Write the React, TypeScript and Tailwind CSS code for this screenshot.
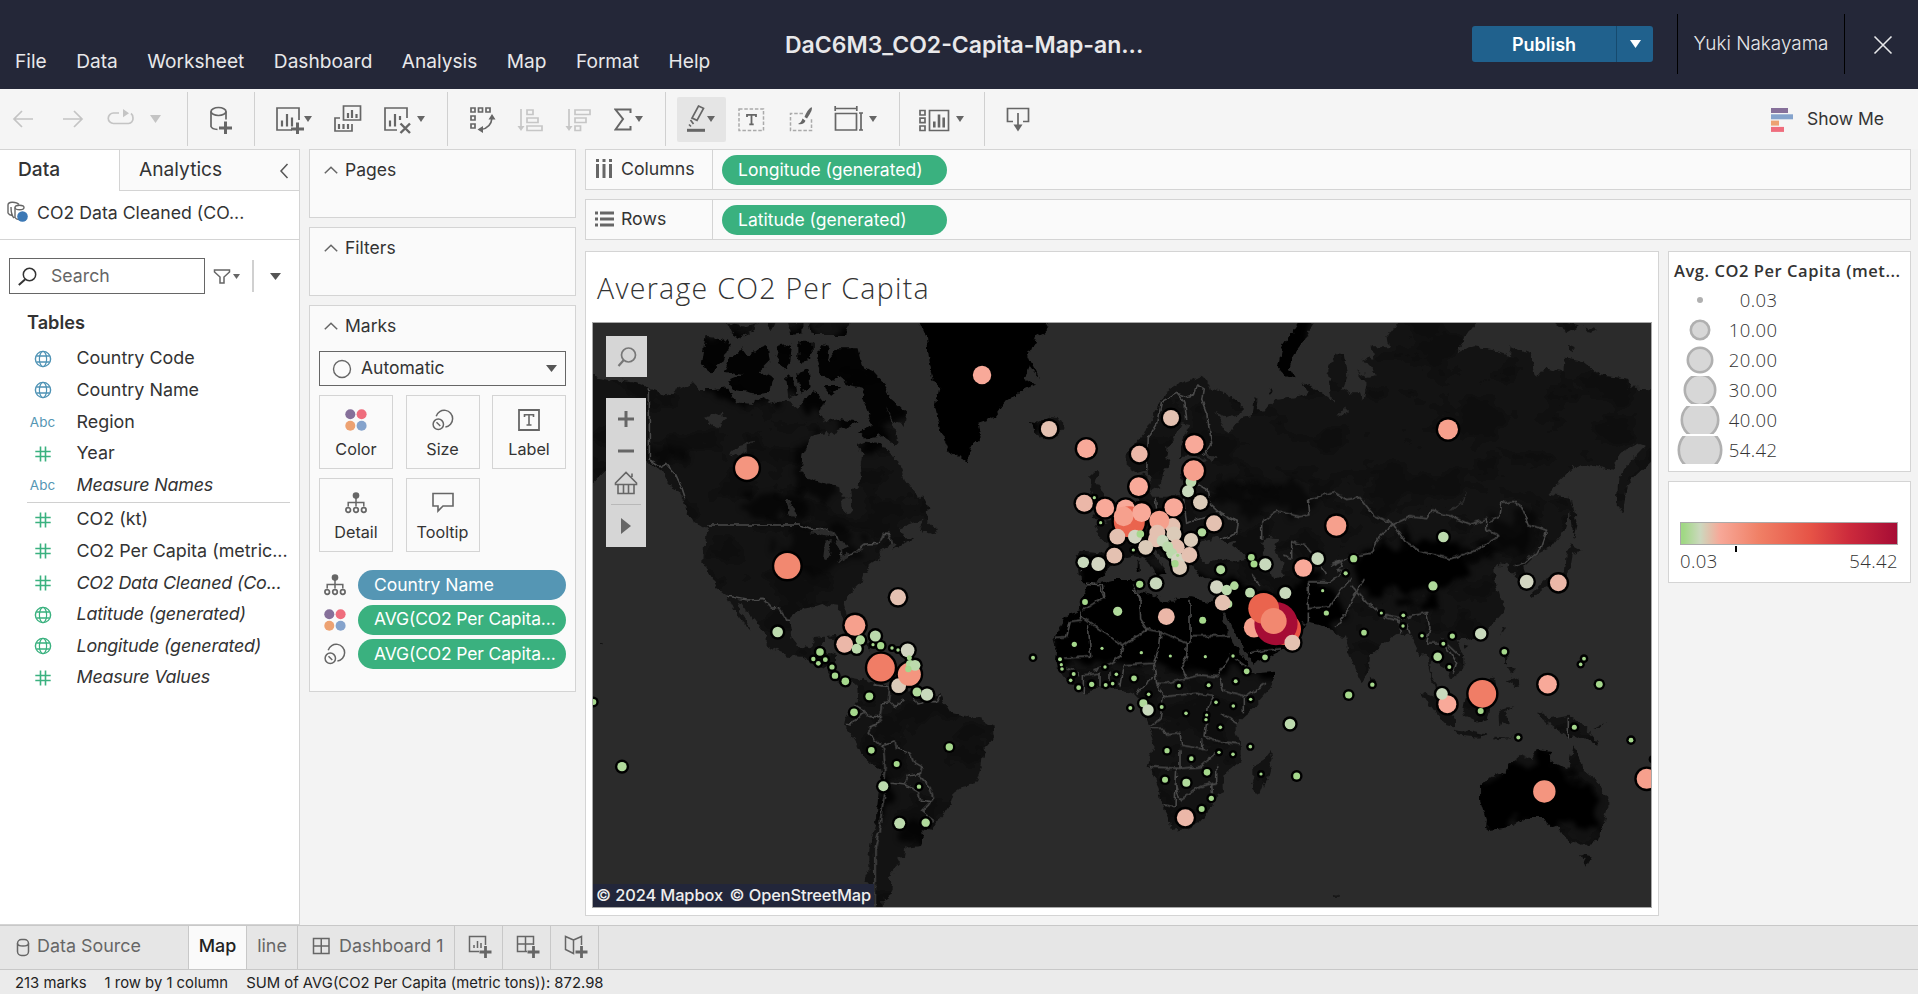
import React from 'react';
import type { ReactNode } from 'react';

/* ---------- map marks ---------- */

type Mark = { x: number; y: number; r: number };

// Each region stores x, y, r triples on its own grid; x and y are scaled to map units.
function region(ox: number, oy: number, sx: number, sy: number, v: number[]): Mark[] {
  const out: Mark[] = [];
  for (let i = 0; i < v.length; i += 3) out.push({ x: ox + v[i] / sx, y: oy + v[i + 1] / sy, r: v[i + 2] });
  return out;
}

const europe = region(1020, 310, 3, 3, [
  87, 357, 8.1, 199, 416, 9.3, 358, 432, 8.3, 453, 324, 8, 523, 403, 9.2, 513, 515, 5.4, 504, 544, 6, 521, 482, 10.3,
  356, 530, 9.3, 541, 577, 7.3, 193, 580, 8.5, 223, 563, 1.6, 255, 594, 9.2, 317, 597, 9.4, 328, 635, 15.5, 311, 619, 9.8,
  365, 608, 9.4, 461, 592, 9.2, 458, 648, 7.9, 408, 688, 8, 418, 632, 10, 412, 668, 8, 462, 672, 7.5,
  345, 680, 7, 361, 672, 3.8, 292, 680, 7.9, 283, 737, 7.9, 190, 757, 5.7, 235, 762, 7, 377, 712, 7.4, 242, 638, 1.6,
  340, 720, 1.6, 582, 640, 8, 546, 667, 4.2, 513, 690, 7.1, 470, 712, 8, 428, 692, 6, 443, 710, 5.4, 455, 730, 5.5,
  474, 750, 7, 479, 773, 7.3, 508, 735, 7.9, 473, 736, 1.6, 465, 761, 3.7, 602, 779, 4.5, 359, 823, 3.6, 408, 820, 6.2,
  195, 876, 2.9, 694, 742, 3.4, 702, 762, 3.5, 736, 763, 6.1, 590, 831, 6.7, 620, 840, 5.2, 643, 827, 4.3,
  625, 882, 4, 608, 878, 7.8, 690, 848, 4.9, 796, 849, 6, 850, 774, 8.8, 893, 746, 6.3, 949, 647, 10, 1001, 746, 3.6,
  977, 790, 2.1, 908, 842, 1.6,
]);

const africa = region(1000, 520, 3, 3, [
  353, 274, 4.6, 499, 290, 8.4, 608, 301, 3.5, 223, 373, 2.6, 306, 385, 1.6, 424, 398, 1.7, 511, 408, 1.6, 616, 410, 1.6,
  699, 408, 1.7, 99, 413, 2, 795, 412, 2.8, 740, 454, 2.8, 707, 484, 2, 180, 418, 2, 184, 434, 1.6, 186, 447, 1.8,
  221, 462, 2, 212, 481, 1.8, 236, 503, 2.4, 275, 493, 2.6, 315, 441, 1.7, 349, 463, 1.8, 317, 495, 2, 338, 491, 1.8,
  402, 475, 2.8, 446, 523, 1.8, 537, 497, 2, 626, 496, 2, 391, 564, 2, 430, 550, 4, 444, 570, 5.7, 485, 561, 2,
  558, 580, 1.8, 648, 547, 1.8, 620, 585, 1.6, 618, 599, 1.7, 700, 558, 1.8, 752, 538, 1.7, 661, 622, 1.8, 751, 680, 1.8,
  699, 703, 1.8, 657, 697, 1.7, 501, 692, 2.6, 574, 716, 2.3, 621, 757, 3.3, 495, 779, 3, 559, 788, 4, 783, 762, 1.6,
  890, 768, 3.5, 870, 612, 5.3, 634, 835, 2.6, 605, 867, 3, 556, 893, 8.5, 1046, 525, 3.6, 1117, 494, 2.2, 1092, 338, 2.8,
  979, 279, 2.6, 1144, 279, 1.6, 1210, 286, 1.9, 1209, 318, 1.7, 762, 322, 10.2, 855, 327, 16, 828, 311, 21.6,
  791, 265, 15.4, 821, 303, 13, 877, 368, 7.9,
]);

const pacific = region(1180, 310, 3, 2.613, [
  804, 312, 10, 790, 593, 5.3, 759, 721, 4.6, 1040, 710, 6.9, 1135, 713, 8.4, 902, 846, 5.7, 726, 851, 1.8, 817, 852, 2.6,
  790, 872, 2, 773, 906, 4.3, 808, 933, 2, 973, 893, 2.8, 1212, 911, 1.9, 1202, 926, 1.8, 1103, 978, 9.2, 1258, 978, 3.4,
  907, 1003, 13.8, 902, 1048, 3, 802, 1030, 9, 786, 1003, 5.8, 1015, 1117, 2, 1183, 1090, 2.5, 1353, 1124, 2.4,
  1093, 1258, 11.2, 1400, 1225, 10, 1418, 1174, 1.6,
]);

const americas = region(580, 500, 3, 3, [
  622, 198, 13.1, 954, 292, 8, 593, 396, 5.3, 794, 433, 8.4, 825, 376, 10.4, 830, 446, 5, 841, 420, 4.7, 886, 408, 5.5,
  879, 434, 1.6, 902, 437, 3.6, 936, 444, 1.7, 954, 450, 1.7, 983, 451, 6.8, 956, 557, 7.4, 988, 523, 11.5, 988, 473, 2.5,
  990, 492, 4, 1005, 496, 5.4, 985, 507, 3.2, 903, 503, 13.8, 720, 456, 3.8, 700, 477, 2.2, 715, 490, 2.4, 736, 479, 2.4,
  756, 501, 2.6, 765, 527, 3.2, 796, 544, 3.8, 868, 589, 3.9, 822, 637, 3.8, 1011, 576, 4.5, 1041, 584, 6.2, 874, 751, 3.3,
  950, 792, 3, 1108, 741, 3.7, 910, 859, 5, 1017, 860, 2.2, 959, 970, 5.5, 1037, 968, 4.2, 126, 800, 4.7, 40, 606, 3,
]);

const north = region(580, 145, 2.45, 3, [409, 969, 11.8, 985, 690, 9.2]);

const marks = [...americas, ...north, ...europe, ...africa, ...pacific];

const ramp: [number, string][] = [
  [3.9, '#a5d88c'], [4.8, '#b0da9b'], [5.6, '#bcdaad'], [6.4, '#c8d9bc'], [7.0, '#d2d5c1'], [7.6, '#dbcbb9'],
  [8.2, '#e4c1b1'], [8.7, '#ebb7a8'], [9.5, '#f8a999'], [10.8, '#f6a08d'], [12.5, '#f4957f'], [13.4, '#f28870'],
  [14.5, '#f07d66'], [15.8, '#ea644e'], [17, '#ea5545'], [99, '#a60c35'],
];
const shade = (r: number) => ramp.find(([max]) => r <= max)![1];

/* ---------- map base ---------- */

function Land() {
  return (
    <>
      <g transform="translate(580 145) scale(.40816 .33333)">
        <path d="M20,690 60,700 130,712 165,728 210,748 240,735 275,715 290,735 330,735 360,730 385,775 420,780 445,755 470,770 500,770 520,775 535,790 550,760 580,740 600,770 590,800 600,830 620,850 600,865 575,870 560,895 545,930 540,980 560,1000 600,1015 635,1030 640,1060 650,1100 662,1105 668,1070 665,1040 690,1010 685,960 690,930 680,900 700,890 740,895 760,925 775,950 785,960 800,1010 825,1050 850,1080 850,1120 780,1150 300,1150 275,1130 260,1100 255,1070 240,1040 215,1010 200,975 175,960 160,940 100,960 60,980 20,1030Z" />
        <path d="M310,575 345,580 370,600 350,650 320,680 298,660 303,620ZM365,640 400,610 415,635 440,610 460,600 465,650 440,680 470,700 465,740 430,745 380,735 360,710 400,690 350,680ZM490,600 520,595 515,650 500,675 480,640ZM535,590 570,590 570,620 545,660 535,640ZM590,600 610,605 605,650 630,610 680,610 690,660 720,680 750,720 760,760 800,800 795,840 770,830 750,790 770,850 778,890 770,900 740,870 700,880 680,860 715,845 705,800 690,760 700,730 660,720 640,700 620,710 590,690 580,650ZM360,535 400,545 435,535 430,555 390,575 370,560ZM505,530 545,530 545,565 515,570ZM460,530 480,530 470,560ZM560,530 660,530 655,570 570,570ZM535,680 560,670 565,730 540,740ZM505,690 525,700 530,750 510,760ZM600,720 640,720 610,750ZM600,830 640,820 680,830 650,850 610,870Z" />
        <path d="M830,525 850,580 855,640 865,700 880,730 870,790 885,870 900,915 935,940 950,955 960,910 980,870 975,835 1010,820 1040,770 1080,740 1115,720 1090,700 1100,660 1125,700 1105,650 1095,620 1120,600 1110,580 1135,565 1150,545 1140,525ZM1105,825 1125,830 1150,815 1175,820 1187,845 1160,880 1130,875 1115,860Z" />
      </g>
      <g transform="translate(580 500) scale(.33333)">
        <path d="M310,0 335,30 345,45 370,75 382,90 375,130 373,190 385,215 400,240 412,265 440,285 452,310 465,335 480,360 505,385 515,395 505,375 490,350 478,330 470,305 485,310 500,335 520,355 545,385 560,410 560,435 590,450 630,468 665,470 690,480 705,495 740,505 750,530 775,550 800,556 815,546 830,560 840,550 835,540 815,536 785,538 768,520 768,468 745,460 718,455 725,440 735,425 735,410 705,415 690,445 655,440 635,415 630,380 635,345 650,328 700,322 730,312 745,318 775,320 785,345 797,360 803,345 790,305 810,280 840,250 850,220 870,195 900,175 895,155 920,140 950,130 940,150 970,130 1000,115 975,110 960,85 950,70 970,60 1000,65 1010,50 1045,30 1040,10 1030,-10 310,-10ZM1015,85 1035,50 1045,40 1045,65 1070,90 1065,105 1040,95ZM64,430 71,430 71,436 64,436ZM740,408 770,405 800,425 780,428ZM860,430 900,430 905,445 865,448Z" />
        <path d="M830,545 850,530 870,545 900,550 935,560 960,580 990,570 1020,590 1050,590 1085,585 1090,600 1110,635 1150,645 1175,655 1200,655 1240,680 1245,710 1210,750 1205,795 1185,850 1150,858 1120,880 1110,915 1090,945 1065,975 1060,990 1025,985 1030,1010 1020,1035 980,1040 975,1068 950,1070 960,1090 935,1115 925,1135 942,1160 930,1185 910,1200 912,1230 885,1230 885,1150 850,1145 865,1110 865,1070 875,1010 890,960 895,880 905,830 900,805 870,790 845,765 830,730 810,700 795,680 800,650 825,615 835,600Z" />
      </g>
      <g transform="translate(1020 310) scale(.33333)">
        <path d="M175,750 170,735 180,725 240,730 270,735 265,700 240,680 225,650 260,640 280,620 310,600 350,570 370,555 345,530 345,500 375,490 380,530 400,560 440,560 490,550 490,520 480,490 520,470 560,455 540,440 480,440 480,410 490,380 510,345 485,340 460,390 440,410 436,440 450,465 430,490 420,530 395,545 385,480 350,490 320,470 320,430 345,405 375,370 395,320 420,280 440,245 480,220 540,200 560,210 570,235 620,250 665,285 665,310 620,320 585,305 605,325 600,350 630,370 660,325 695,318 700,265 715,270 710,300 730,305 760,270 840,260 870,245 850,220 900,245 940,275 920,190 945,135 975,140 985,200 970,240 990,250 980,290 955,320 985,310 1010,260 1020,255 1040,900 640,900 640,870 640,825 600,815 560,810 530,790 520,760 500,770 490,800 470,795 455,760 430,740 400,710 390,720 430,770 440,790 410,800 380,750 350,735 310,745 290,760 260,780 240,805 215,820 180,815 178,790ZM215,490 235,490 230,520 250,545 260,575 285,610 250,625 215,625 235,600 225,570 210,540ZM175,565 205,560 205,600 175,605ZM840,30 885,35 850,90 820,130 810,170 830,205 800,200 775,170 785,110 805,80 820,60ZM350,755 359,755 359,782 350,782Z" />
      </g>
      <g transform="translate(1000 520) scale(.33333)">
        <path d="M270,185 300,190 340,180 400,180 415,185 412,215 455,225 490,245 520,248 530,230 570,232 620,245 655,248 665,280 680,330 690,345 700,375 720,400 740,430 755,458 825,452 825,475 800,520 755,570 710,610 710,640 722,670 722,720 680,755 670,770 672,815 650,825 640,855 600,905 560,925 515,930 508,895 485,850 475,800 460,765 443,740 455,700 463,670 450,625 440,600 425,575 425,545 405,525 380,520 350,500 300,505 250,520 210,490 185,460 165,425 170,380 162,352 200,290 240,270 242,245 260,215ZM812,690 818,720 800,780 785,820 765,825 750,805 760,770 760,735 790,720ZM999,1119 1013,1121 1013,1127 999,1127Z" />
      </g>
      <g transform="translate(1180 310) scale(.33333 .38270)">
        <path d="M500,240 510,215 540,215 550,240 560,190 530,160 560,175 590,170 550,125 580,130 575,95 630,95 625,65 660,25 895,25 830,108 880,95 940,105 990,120 995,95 1050,115 1070,178 1095,150 1150,160 1155,125 1200,130 1260,170 1345,180 1350,205 1430,208 1430,380 1370,430 1340,460 1330,530 1310,510 1315,440 1345,400 1395,355 1380,350 1320,375 1300,415 1240,405 1180,410 1140,445 1110,480 1165,490 1175,520 1150,580 1115,620 1065,640 1030,670 1045,710 1020,715 1005,690 985,670 975,660 940,680 945,705 960,745 975,770 970,790 940,820 900,850 860,860 830,860 850,910 850,940 810,965 800,940 770,925 755,900 750,940 770,985 800,1020 790,1025 755,975 740,900 720,905 700,870 685,845 645,850 600,880 570,905 565,945 545,970 525,940 505,890 495,850 480,860 455,830 400,820 380,815 350,860 300,890 215,930 205,905 175,860 125,785 120,750 120,600 500,300Z" />
        <path d="M720,995 760,1010 800,1040 825,1070 825,1090 800,1085 765,1050ZM820,1095 870,1100 920,1110 890,1115 830,1108ZM940,1115 1000,1118 940,1122ZM850,1045 860,1000 900,970 940,960 950,1000 930,1030 920,1070 890,1075 855,1060ZM955,1045 1000,1035 975,1050 990,1085 965,1070 958,1090ZM965,880 985,890 980,925 970,910ZM980,970 1015,960 1020,985 1000,980ZM980,935 1010,940 995,955ZM1065,1050 1095,1050 1105,1070 1165,1060 1205,1080 1255,1130 1220,1125 1185,1110 1165,1120 1130,1095 1080,1065ZM1175,615 1205,630 1175,640 1165,690 1150,705 1090,730 1060,750 1055,740 1100,700 1155,680 1160,640ZM1175,490 1190,560 1180,595 1173,520ZM965,825 975,830 965,845ZM850,872 865,875 855,882ZM575,955 588,975 578,985ZM1240,1095 1275,1080 1260,1095Z" />
        <path d="M900,1245 930,1220 980,1205 985,1190 1020,1165 1055,1175 1070,1150 1120,1155 1110,1175 1165,1200 1180,1140 1195,1165 1215,1205 1245,1225 1285,1275 1285,1300 1265,1355 1250,1390 1205,1400 1170,1385 1145,1370 1130,1350 1115,1355 1095,1325 1040,1325 990,1350 915,1360 918,1330 900,1280ZM1205,1425 1235,1430 1220,1455ZM1130,25 1200,40 1160,60 1130,45ZM1210,40 1255,52 1230,60ZM1160,90 1185,100 1170,108ZM265,208 275,212 268,222Z" />
      </g>
    </>
  );
}

function Water() {
  return (
    <>
      <g transform="translate(580 500) scale(.33333)">
        <path d="M690,100 725,85 755,90 765,110 730,105ZM730,175 735,125 755,120 750,165 740,180ZM765,120 795,125 805,140 780,150ZM775,178 810,160 815,165 780,184ZM815,155 845,148 840,156ZM618,0 638,55 646,50 630,0ZM785,0 790,30 810,42 820,30 812,-10Z" />
      </g>
      <g transform="translate(580 145) scale(.40816 .33333)">
        <path d="M300,820 350,800 355,825 330,850ZM370,925 390,900 425,890 405,915 380,935ZM508,1065 525,1110 518,1115ZM640,760 700,790 690,820 650,800 625,780Z" />
      </g>
      <g transform="translate(1020 310) scale(.33333)">
        <path d="M530,730 540,700 590,680 620,700 650,690 640,710 690,745 640,755 600,750 560,760ZM725,700 740,680 780,685 760,710 790,760 790,800 760,810 750,780 735,740ZM560,425 590,440 580,460 560,445Z" />
      </g>
      <g transform="translate(1000 520) scale(.33333)">
        <path d="M660,275 680,285 700,330 725,370 750,415 750,440 735,425 715,395 695,350 680,310Z" />
      </g>
      <g transform="translate(1180 310) scale(.33333 .38270)">
        <path d="M860,468 850,500 820,525 805,527 845,500ZM270,735 300,780 350,810 380,815 350,830 300,800Z" />
      </g>
    </>
  );
}

function Borders() {
  return (
    <g fill="none" stroke="#4a4a4a" strokeWidth="1.6" strokeLinejoin="round">
      <path transform="translate(580 145) scale(.40816 .33333)" vectorEffect="non-scaling-stroke" d="M170,730V945L195,965 210,955 235,990 250,1030 258,1060" />
      <path
        transform="translate(580 500) scale(.33333)"
        vectorEffect="non-scaling-stroke"
        d="M385,75H660L690,88 735,85 765,105 780,130 785,175 830,155 855,132 900,130 910,100 925,100 935,135M440,288 500,300 550,298 575,325 595,322 620,360 635,362M880,555 930,560 925,600 945,620 970,600M1000,590 1010,612 1040,605 1070,605 1085,585M825,615 850,630 870,650 900,650 905,610 925,605M900,655V670L870,680 865,700 885,720 905,738 945,725 950,745 990,760 1000,785 1025,800 1020,830 1050,860 1060,895 1045,915 1025,935 1065,965M910,740 915,800 910,850M935,850 975,855 985,825 1020,820M975,855 1015,875 1020,900 1050,905M915,880 905,930 900,980 885,1050V1220M800,670 815,672 850,635"
      />
      <path
        transform="translate(1020 310) scale(.33333)"
        vectorEffect="non-scaling-stroke"
        d="M380,480 385,380 410,340 425,275 470,250 500,260 520,255 530,225 550,235M470,250 495,280 500,330M550,235 545,270 560,310 575,400 550,440M480,535 540,525 565,540 570,580 605,612 655,635 650,670 600,690M490,560 500,640 560,620 605,612M405,560 410,600M440,660 500,680M340,840 365,870M195,820 250,825 255,865M180,780 200,760M290,770 265,735M370,640 350,690 390,690"
      />
      <path
        transform="translate(1180 310) scale(.33333 .38270)"
        vectorEffect="non-scaling-stroke"
        d="M245,600V555L290,525 360,540 390,535 385,495 460,475 500,495 540,490 580,535 640,560 600,590 575,635 510,645 450,670M335,650V605L375,615 400,640 440,690M640,560 690,540 740,545 755,525 815,540 870,560 920,545V575L960,590 880,630 810,650 720,630 675,605 640,560M930,552 960,540 965,505 1000,500 1025,515 1045,560 1100,575 1080,625 1035,660 1000,670M385,710 450,710 500,680M385,710V780L450,775 485,730 515,700M385,790V820M550,700 520,750 500,790 465,830M515,720 560,765 610,795 670,805 740,790 750,830 740,870 790,870 830,920 820,950M570,770 620,805 660,812M655,810 665,845M680,820 690,845M785,860 840,905M210,895 300,885M310,640 335,650M195,730 215,765 250,770M215,690 240,720M1165,1065V1120M460,660 480,655 490,670 470,680 500,685"
      />
      <path
        transform="translate(1000 520) scale(.33333)"
        vectorEffect="non-scaling-stroke"
        d="M300,195 312,230 250,270M242,270 245,300 210,305 200,350 165,352M265,315 272,410 185,415M245,290 370,378 440,328 422,300 420,240 400,190M440,328 480,335 562,370M570,240V362L562,370M570,347H690M370,378 360,410 330,430 280,450M480,335 475,390 460,430 370,435M562,370 560,410 545,440 560,475 500,490 470,490 460,430M560,475 600,465 650,470 690,410M660,470 670,510 740,530 795,490M370,435 360,500M250,520 250,465 300,460 300,500M330,455V500M470,490 490,530 590,520 640,530 625,560 615,650M490,530 480,600 445,620M450,625 490,625 500,645 540,640 545,675 620,690M540,690V745L445,740M530,745 525,860 490,855M525,790 540,840 600,800 640,790M540,745 600,740 650,700M650,735V790L635,795 640,850M665,580 712,610M730,580V530M615,650 660,665 720,672M605,655V690M170,440 220,450 240,470M690,405 740,440M410,520 460,470"
      />
    </g>
  );
}

function WorldMap() {
  return (
    <svg viewBox="593 323 1058 584" className="block h-[584px] w-[1058px]">
      <defs>
        <filter id="coast" x="-5%" y="-5%" width="110%" height="110%">
          <feTurbulence type="fractalNoise" baseFrequency="0.12" numOctaves="3" seed="4" result="n" />
          <feDisplacementMap in="SourceGraphic" in2="n" scale="8" xChannelSelector="R" yChannelSelector="G" />
        </filter>
        <filter id="ridge" x="-5%" y="-5%" width="110%" height="110%">
          <feTurbulence type="fractalNoise" baseFrequency="0.15" numOctaves="2" seed="9" result="n" />
          <feDisplacementMap in="SourceGraphic" in2="n" scale="5" xChannelSelector="R" yChannelSelector="G" />
        </filter>
        <filter id="relief" x="0" y="0" width="100%" height="100%">
          <feTurbulence type="fractalNoise" baseFrequency="0.022 0.03" numOctaves="4" seed="12" />
          <feColorMatrix values="0 0 0 0 0  0 0 0 0 0  0 0 0 0 0  4 0 0 0 -1.8" />
          <feComponentTransfer>
            <feFuncA type="discrete" tableValues="0 0.14 0.28" />
          </feComponentTransfer>
        </filter>
        <filter id="soft" x="-30%" y="-30%" width="160%" height="160%">
          <feTurbulence type="fractalNoise" baseFrequency="0.05" numOctaves="3" seed="21" result="n" />
          <feDisplacementMap in="SourceGraphic" in2="n" scale="40" xChannelSelector="R" yChannelSelector="G" />
          <feGaussianBlur stdDeviation="2.5" />
        </filter>
        <mask id="land" maskUnits="userSpaceOnUse" x="580" y="310" width="1090" height="610">
          <g filter="url(#coast)">
            <g fill="#fff">
              <Land />
            </g>
            <g fill="#000">
              <Water />
            </g>
          </g>
        </mask>
      </defs>
      <rect x="590" y="320" width="1070" height="590" fill="#2b2b2b" />
      <g mask="url(#land)">
        <rect x="590" y="320" width="1070" height="590" fill="#131313" />
        <rect x="590" y="320" width="1070" height="590" filter="url(#relief)" />
        <g fill="#000" filter="url(#soft)">
          <path d="M890,290 1080,290 1070,380 1010,440 985,490 930,490Z" />
          <path d="M1040,660 1070,600 1085,565 1180,565 1260,590 1330,580 1345,615 1280,680 1240,668 1180,670 1100,664 1060,665Z" />
          <path d="M1350,565 1390,540 1460,545 1470,570 1440,595 1400,600 1360,590Z" />
          <path d="M1470,785 1510,770 1550,750 1575,775 1600,800 1595,830 1560,825 1530,820 1475,840Z" />
          <path d="M690,330 860,330 905,410 880,450 840,430 800,395 740,405 700,390Z" opacity=".8" />
          <ellipse cx="815" cy="470" rx="26" ry="30" opacity=".6" />
          <ellipse cx="820" cy="550" rx="42" ry="22" opacity=".5" />
          <ellipse cx="775" cy="505" rx="30" ry="14" opacity=".6" />
          <ellipse cx="650" cy="455" rx="30" ry="10" opacity=".4" />
          <ellipse cx="910" cy="835" rx="18" ry="10" opacity=".7" />
          <ellipse cx="882" cy="795" rx="7" ry="30" opacity=".8" />
          <ellipse cx="1262" cy="498" rx="60" ry="14" opacity=".5" />
          <ellipse cx="1290" cy="348" rx="26" ry="38" opacity=".9" />
          <ellipse cx="1440" cy="552" rx="60" ry="12" opacity=".7" />
          <ellipse cx="1515" cy="535" rx="22" ry="20" opacity=".5" />
        </g>
        <g filter="url(#ridge)">
          <Borders />
        </g>
      </g>
      {marks.map((m, i) => (
        <circle key={i} cx={m.x} cy={m.y} r={m.r + 2.4} fill="#000" />
      ))}
      {marks.map((m, i) => (
        <circle key={i} cx={m.x} cy={m.y} r={m.r} fill={shade(m.r)} />
      ))}
    </svg>
  );
}

/* ---------- small icons ---------- */

function Caret({ className = '' }: { className?: string }) {
  return (
    <svg viewBox="0 0 8 6" className={`shrink-0 ${className}`} fill="currentColor" preserveAspectRatio="none">
      <path d="M0 0h8L4 6z" />
    </svg>
  );
}

function Ico({ w, h = 30, className = '', children }: { w: number; h?: number; className?: string; children: ReactNode }) {
  return (
    <svg width={w} height={h} viewBox={`0 0 ${w} ${h}`} className={`shrink-0 ${className}`} fill="none" stroke="currentColor" strokeWidth="1.7">
      {children}
    </svg>
  );
}

const Plus = ({ x, y }: { x: number; y: number }) => <path d={`M${x - 6.5} ${y}h13M${x} ${y - 6.5}v13`} strokeWidth="3" />;

function Globe({ className }: { className: string }) {
  return (
    <Ico w={18} h={18} className={className}>
      <circle cx="9" cy="9" r="7.6" strokeWidth="1.4" />
      <ellipse cx="9" cy="9" rx="3.6" ry="7.6" strokeWidth="1.2" />
      <path d="M2.3 6h13.4M2.3 12h13.4" strokeWidth="1.3" />
    </Ico>
  );
}

function Hash() {
  return (
    <Ico w={16} h={16} className="text-[#3ab17f]">
      <path d="M5.5 .5v15M10.5 .5v15M.3 5.5h15.4M.3 10.5h15.4" strokeWidth="1.6" />
    </Ico>
  );
}

function ColorDots() {
  return (
    <Ico w={22} h={22}>
      <g stroke="none">
        <circle cx="5.3" cy="5.3" r="5" fill="#86709a" />
        <circle cx="16.6" cy="5.3" r="5" fill="#ef6d7d" />
        <circle cx="5.3" cy="16.7" r="5" fill="#eda272" />
        <circle cx="16.6" cy="16.7" r="5" fill="#85a3cc" />
      </g>
    </Ico>
  );
}

function SizeIcon() {
  return (
    <Ico w={22} h={22}>
      <circle cx="6.3" cy="15.3" r="5.2" strokeWidth="1.5" />
      <path d="M4.5 13.3 8.3 17M4.2 7.2A8.4 8.4 0 1 1 13.4 18" strokeWidth="1.5" />
    </Ico>
  );
}

function DetailIcon() {
  return (
    <Ico w={22} h={22}>
      <circle cx="11" cy="3.6" r="3.3" fill="currentColor" stroke="none" />
      <path d="M11 6v8.5M3.2 14.5v-4h15.6v4" strokeWidth="1.5" />
      <circle cx="3.2" cy="18" r="2.3" />
      <circle cx="11" cy="18" r="2.3" />
      <circle cx="18.8" cy="18" r="2.3" />
    </Ico>
  );
}

/* ---------- header ---------- */

function Header() {
  return (
    <header className="flex h-[89px] shrink-0 bg-[#242738] text-[#e8e8ea]">
      <nav className="flex w-[785px] gap-[29.500px] pl-[15px] pt-[48px] text-[19.100px] leading-[26px]">
        {['File', 'Data', 'Worksheet', 'Dashboard', 'Analysis', 'Map', 'Format', 'Help'].map((m) => (
          <span key={m}>{m}</span>
        ))}
      </nav>
      <h1 className="flex-1 pt-[29px] text-[23px] font-semibold leading-[32px]">DaC6M3_CO2-Capita-Map-an...</h1>
      <div className="mt-[26px] flex h-[36px] w-[181px] overflow-hidden rounded-[3px] bg-[#20618d] text-white">
        <button className="flex flex-1 items-center justify-center border-r border-[#164a6e] text-[18px] font-semibold">Publish</button>
        <button className="flex w-[36px] items-center justify-center">
          <Caret className="h-[8px] w-[11px]" />
        </button>
      </div>
      <div className="ml-[24px] mt-[14px] flex h-[60px] w-[168px] items-center justify-center whitespace-nowrap border-x border-black text-[18.900px] font-light">Yuki Nakayama</div>
      <button className="w-[73px] pl-[28px]">
        <Ico w={20} h={20}>
          <path d="M1.5 1.5l17 17M18.500 1.500l-17 17" strokeWidth="1.6" />
        </Ico>
      </button>
    </header>
  );
}

/* ---------- toolbar ---------- */

const Sep = ({ className = '' }: { className?: string }) => <div className={`h-[54px] w-px shrink-0 bg-[#d0d0d0] ${className}`} />;

function Toolbar() {
  return (
    <div className="flex h-[60px] shrink-0 items-center bg-[#f5f5f5] text-[#666]">
      <div className="flex w-[187px] shrink-0 items-center pl-[12px] text-[#c4c4c4]">
        <Ico w={22} h={20}>
          <path d="M21 10H2M10 2L2 10l8 8" />
        </Ico>
        <Ico w={22} h={20} className="ml-[28px]">
          <path d="M1 10h19M12 2l8 8-8 8" />
        </Ico>
        <Ico w={28} h={20} className="ml-[23px]">
          <path d="M12 4H6.500a5 5 0 0 0 0 10.500h15a5 5 0 0 0 4.500-5.500q0-3-2-4.500" />
          <path d="M16 0v8M16 0l6 4.300-6 4z" fill="currentColor" stroke="none" />
        </Ico>
        <Caret className="ml-[15px] h-[8px] w-[11px]" />
      </div>
      <Sep />
      <Ico w={22} className="ml-[22px]">
        <ellipse cx="8.500" cy="7.500" rx="7.500" ry="4" />
        <path d="M1 7.500v15q1 2.500 6.500 3M16 7.500v8" />
        <Plus x={15.500} y={24} />
      </Ico>
      <Sep className="ml-[22px]" />
      <Ico w={29} className="ml-[20px]">
        <path d="M17 26H2V4h22v12" />
        <path d="M7 22.500v-6M12 22.500V10M17 22.500v-9" strokeWidth="2.200" />
        <Plus x={22.500} y={25} />
      </Ico>
      <Caret className="h-[6px] w-[8px]" />
      <Ico w={28} className="ml-[22px]">
        <path d="M9.500 2h17v14h-17zM6 14H1v13h17v-7" />
        <path d="M14 14V9M18 14V6M22.500 14v-4M5 25v-5M9.500 25v-5M14 25v-5" strokeWidth="2.200" />
      </Ico>
      <Ico w={29} className="ml-[21px]">
        <path d="M14 26H2V4h22v10" />
        <path d="M7 22.500v-6M12 22.500V10M17 16v-4" strokeWidth="2.200" />
        <path d="M17.500 19.500l9.500 9.500M27 19.500L17.500 29" strokeWidth="2.400" />
      </Ico>
      <Caret className="ml-[5px] h-[6px] w-[8px]" />
      <Sep className="ml-[22px]" />
      <Ico w={27} className="ml-[22px]">
        <path d="M1 4h4v4H1zM8.500 4h4v4h-4zM16 4h4v4h-4zM1 12h4v4H1zM1 20h4v4H1zM22 14q-1 10-11 11.500" strokeWidth="1.700" />
        <path d="M22 10l3.500 5.500h-7zM7.500 25.500l5.500-3.500v7z" fill="currentColor" stroke="none" />
      </Ico>
      <Ico w={27} className="ml-[20px] text-[#c6c6c6]">
        <path d="M4 5v18M10 6h6v4.500h-6zM10 14h11v4.500H10zM10 22h15v4.500H10z" />
        <path d="M.5 22h7L4 27z" fill="currentColor" stroke="none" />
      </Ico>
      <Ico w={27} className="ml-[21px] text-[#c6c6c6]">
        <path d="M4 5v18M10 6h15v4.500H10zM10 14h11v4.500H10zM10 22h5.500v4.500H10z" />
        <path d="M.5 22h7L4 27z" fill="currentColor" stroke="none" />
      </Ico>
      <Ico w={19} className="ml-[22px]">
        <path d="M16.500 9V5.500H1.500L9 15 1.500 25.500h15V22" strokeWidth="2" />
      </Ico>
      <Caret className="ml-[2px] h-[6px] w-[8px]" />
      <Sep className="ml-[22px]" />
      <div className="ml-[11px] flex h-[45px] w-[49px] items-center rounded-[2px] bg-[#e5e5e5] pl-[10px]">
        <Ico w={20}>
          <path d="M11.500 2l5 2.300-6.500 12-5-2.300zM3.500 16l3 4M2 20.500l2 2" strokeWidth="1.700" />
          <path d="M0 26.300h18" strokeWidth="3" />
        </Ico>
        <Caret className="h-[6px] w-[8px]" />
      </div>
      <Ico w={27} className="ml-[12px]">
        <path d="M1 5h24.500v21.500H1z" strokeDasharray="3.500 1.800" stroke="#aaa" strokeWidth="1.500" />
        <path d="M9 13v-2.200h9V13M13.500 11v9.500M11.300 20.300h4.400" strokeWidth="1.800" />
      </Ico>
      <Ico w={26} className="ml-[24px]">
        <path d="M14 9.500H1.500v17h21V14" strokeDasharray="3.500 1.800" stroke="#aaa" strokeWidth="1.500" />
        <path d="M22.500 3Q24.500 5 18 14.500L15.500 13Q18 6 22.500 3z" fill="currentColor" stroke="none" />
        <path d="M13.500 14.500l3 2.200q-1.500 4.300-7.500 3.300 3.500-1.500 4.500-5.500z" fill="currentColor" stroke="none" />
      </Ico>
      <Ico w={30} className="ml-[19px]">
        <path d="M1.500 9.500h21V26h-21zM1 4.500h22M1.200 2v5M22.800 2v5M27 9v17M25 9h4M25 26h4" />
      </Ico>
      <Caret className="ml-[5px] h-[6px] w-[8px]" />
      <Sep className="ml-[22px]" />
      <Ico w={32} className="ml-[19px]">
        <path d="M1 6.500h5V11H1zM1 14.200h5v4.500H1zM1 22h5v4.500H1zM10.500 6.500h19v20h-19z" />
        <path d="M15.300 23.500v-6M20 23.500v-13M24.700 23.500v-10" strokeWidth="2.600" />
      </Ico>
      <Caret className="ml-[5px] h-[6px] w-[8px]" />
      <Sep className="ml-[20px]" />
      <Ico w={24} className="ml-[21px]">
        <path d="M7 17.500H1.500V4.500h21v13H17M12 9v13" />
        <path d="M7.500 20.500h9L12 27.500z" fill="currentColor" stroke="none" />
      </Ico>
      <div className="ml-auto mr-[34px] flex items-center gap-[14px] pt-px text-[17.500px] text-[#333]">
        <Ico w={22} h={24}>
          <g stroke="none">
            <path d="M0 0h17v5H0z" fill="#86709a" />
            <path d="M0 6.300h22v5H0z" fill="#85a3cc" />
            <path d="M0 12.600h8v5H0z" fill="#eda272" />
            <path d="M0 18.900h13v5H0z" fill="#ef6d7d" />
          </g>
        </Ico>
        Show Me
      </div>
    </div>
  );
}

/* ---------- data pane ---------- */

type Field = { kind: 'geo' | 'abc' | 'num'; tone?: 'green'; label: string; italic?: boolean };

const dimensions: Field[] = [
  { kind: 'geo', label: 'Country Code' },
  { kind: 'geo', label: 'Country Name' },
  { kind: 'abc', label: 'Region' },
  { kind: 'num', label: 'Year' },
  { kind: 'abc', label: 'Measure Names', italic: true },
];
const measures: Field[] = [
  { kind: 'num', label: 'CO2 (kt)' },
  { kind: 'num', label: 'CO2 Per Capita (metric...' },
  { kind: 'num', label: 'CO2 Data Cleaned (Co...', italic: true },
  { kind: 'geo', tone: 'green', label: 'Latitude (generated)', italic: true },
  { kind: 'geo', tone: 'green', label: 'Longitude (generated)', italic: true },
  { kind: 'num', label: 'Measure Values', italic: true },
];

function FieldRow({ f }: { f: Field }) {
  return (
    <div className="flex h-[31.6px] shrink-0 items-center whitespace-nowrap text-[17.900px] text-[#333]">
      <div className="ml-[27px] mr-[18.500px] flex w-[31px] justify-center">
        {f.kind === 'geo' && <Globe className={f.tone ? 'text-[#3ab17f]' : 'text-[#4f93b5]'} />}
        {f.kind === 'abc' && <span className="text-[13.500px] text-[#5596b4]">Abc</span>}
        {f.kind === 'num' && <Hash />}
      </div>
      <span className={f.italic ? 'tracking-[-.2px] italic' : ''}>{f.label}</span>
    </div>
  );
}

function DataPane() {
  return (
    <aside className="flex w-[300px] shrink-0 flex-col border-y border-r border-[#d4d4d4] bg-white text-[#333]">
      <div className="flex h-[41px] shrink-0 text-[19.200px]">
        <div className="w-[119px] pl-[18px] pt-[5px] font-medium leading-[28px]">Data</div>
        <div className="flex flex-1 items-start justify-between border-b border-l border-[#d4d4d4] bg-[#fafafa] pl-[19px] pr-[10px] pt-[5px] leading-[28px]">
          Analytics
          <Ico w={10} h={16} className="mt-[8px] text-[#555]">
            <path d="M8.500 1L2 8l6.500 7" strokeWidth="1.500" />
          </Ico>
        </div>
      </div>
      <div className="flex h-[49px] shrink-0 items-start border-b border-[#d4d4d4] pl-[7px] pt-[8px] text-[17.700px] leading-[28px]">
        <Ico w={24} h={22} className="mr-[6px] mt-[2px] text-[#666]">
          <path d="M12 3.500Q10 1 5 1.200 1 1.500 1 4v8q1 2 4 2.500M4 6q0 8 3 11M8 6.500v10q1 2 4 2" strokeWidth="1.400" />
          <ellipse cx="12.500" cy="6.500" rx="4.500" ry="2.200" strokeWidth="1.400" />
          <circle cx="15.500" cy="15.500" r="5.300" fill="#3b78b5" stroke="none" />
        </Ico>
        CO2 Data Cleaned (CO...
      </div>
      <div className="mt-[18px] flex h-[36px] shrink-0 items-center pl-[9px]">
        <div className="flex h-[36px] w-[196px] items-center border border-[#666] pl-[8px] text-[17.700px] text-[#666]">
          <Ico w={19} h={19} className="mr-[14px] text-[#333]">
            <circle cx="11.500" cy="7.500" r="6.200" strokeWidth="1.500" />
            <path d="M7 12.500L.8 18" strokeWidth="2" />
          </Ico>
          Search
        </div>
        <Ico w={18} h={17} className="ml-[8px] text-[#666]">
          <path d="M1.500 2h15v2l-5.500 5v6H7V9L1.500 4z" strokeWidth="1.500" />
        </Ico>
        <Caret className="ml-[2px] h-[5px] w-[7px] text-[#666]" />
        <div className="ml-[12px] h-[32px] w-[2px] bg-[#d0d0d0]" />
        <Caret className="ml-[16px] h-[7px] w-[11px] text-[#555]" />
      </div>
      <div className="mb-[7px] mt-[14px] pl-[27px] text-[18.200px] font-semibold leading-[28px] text-[#333]">Tables</div>
      {dimensions.map((f) => (
        <FieldRow key={f.label} f={f} />
      ))}
      <div className="mb-px ml-[27px] mr-[9px] mt-px h-px shrink-0 bg-[#d0d0d0]" />
      {measures.map((f) => (
        <FieldRow key={f.label} f={f} />
      ))}
    </aside>
  );
}

/* ---------- cards ---------- */

function CardTitle({ children }: { children: string }) {
  return (
    <div className="flex items-center gap-[7px] pl-[14px] pt-[6px] text-[17.500px] leading-[28px] text-[#333]">
      <Ico w={14} h={8} className="text-[#666]">
        <path d="M.8 7.300L7 1.200l6.200 6.100" strokeWidth="1.500" />
      </Ico>
      {children}
    </div>
  );
}

function MarkButton({ label, children }: { label: string; children: ReactNode }) {
  return (
    <div className="flex h-[74px] w-[74px] flex-col items-center border border-[#d4d4d4] pt-[13px] text-[16.200px] leading-[24px] text-[#333]">
      <div className="flex h-[22px] items-center text-[#666]">{children}</div>
      <span className="mt-[6px]">{label}</span>
    </div>
  );
}

function MarkPill({ color, label, icon }: { color: string; label: string; icon: ReactNode }) {
  return (
    <div className="flex h-[30px] items-center">
      <div className="flex w-[39px] justify-start pl-[5px] text-[#666]">{icon}</div>
      <div className={`flex h-[30px] w-[208px] items-center whitespace-nowrap rounded-full pl-[16px] text-[17.500px] text-white ${color}`}>{label}</div>
    </div>
  );
}

function Cards() {
  return (
    <div className="flex w-[267px] shrink-0 flex-col gap-[9px]">
      <section className="h-[69px] border border-[#d4d4d4] bg-[#fafafa]">
        <CardTitle>Pages</CardTitle>
      </section>
      <section className="h-[69px] border border-[#d4d4d4] bg-[#fafafa]">
        <CardTitle>Filters</CardTitle>
      </section>
      <section className="h-[387px] border border-[#d4d4d4] bg-[#fafafa]">
        <CardTitle>Marks</CardTitle>
        <div className="ml-[9px] mt-[11px] flex h-[35px] w-[247px] items-center border border-[#666] bg-[#fafafa] pl-[12px] pr-[8px] text-[17.500px] text-[#333]">
          <Ico w={20} h={20} className="mr-[9px] text-[#666]">
            <circle cx="10" cy="10" r="8.500" strokeWidth="1.400" />
          </Ico>
          Automatic
          <Caret className="ml-auto h-[7px] w-[11px] text-[#555]" />
        </div>
        <div className="ml-[9px] mt-[9px] grid grid-cols-[74px_74px_74px] gap-x-[12.500px] gap-y-[9px]">
          <MarkButton label="Color">
            <ColorDots />
          </MarkButton>
          <MarkButton label="Size">
            <SizeIcon />
          </MarkButton>
          <MarkButton label="Label">
            <Ico w={22} h={22}>
              <path d="M1 1h20v20H1z" strokeWidth="1.800" />
              <path d="M6.500 8V5.700h9V8M11 5.700V16M8.500 16h5" strokeWidth="1.600" />
            </Ico>
          </MarkButton>
          <MarkButton label="Detail">
            <DetailIcon />
          </MarkButton>
          <MarkButton label="Tooltip">
            <Ico w={22} h={22}>
              <path d="M1 1.500h20V14H11l-5 5v-5H1z" strokeWidth="1.600" />
            </Ico>
          </MarkButton>
        </div>
        <div className="ml-[9px] mt-[18px] flex flex-col gap-[4.500px]">
          <MarkPill color="bg-[#5596b4]" label="Country Name" icon={<DetailIcon />} />
          <MarkPill color="bg-[#3ab17f] tracking-[-.15px]" label="AVG(CO2 Per Capita..." icon={<ColorDots />} />
          <MarkPill color="bg-[#3ab17f] tracking-[-.15px]" label="AVG(CO2 Per Capita..." icon={<SizeIcon />} />
        </div>
      </section>
    </div>
  );
}

/* ---------- view ---------- */

function Shelf({ name, pill, icon }: { name: string; pill: string; icon: ReactNode }) {
  return (
    <div className="flex h-[41px] border border-[#d4d4d4] bg-[#fafafa]">
      <div className="flex w-[127px] items-start border-r border-[#d4d4d4] pl-[9px] text-[17.700px] leading-[37px] text-[#333]">
        <div className="mr-[7px] mt-[9px] w-[19px] text-[#666]">{icon}</div>
        {name}
      </div>
      <div className="ml-[9px] mt-[5px] flex h-[30px] w-[225px] items-center rounded-full bg-[#3ab17f] pl-[16px] text-[17.500px] text-white">{pill}</div>
    </div>
  );
}

const sizes: [number, string][] = [
  [3, '0.03'],
  [9.2, '10.00'],
  [12.2, '20.00'],
  [15.2, '30.00'],
  [18.2, '40.00'],
  [21.2, '54.42'],
];

function Legends() {
  return (
    <div className="flex w-[243px] shrink-0 flex-col gap-[9px] font-['Open_Sans',sans-serif] text-[#333]">
      <section className="h-[221px] border border-[#d4d4d4] bg-white pt-[5px]">
        <div className="whitespace-nowrap pl-[5px] text-[16.500px] font-semibold leading-[28px] tracking-[.550px]">Avg. CO2 Per Capita (met...</div>
        {sizes.map(([r, t], i) => (
          <div key={t} className="flex h-[30px] items-center">
            <svg width="46" height="28" viewBox="0 0 46 28" className="ml-[7.500px]">
              {i === 0 ? (
                <circle cx="23" cy="14" r={r} fill="#b0b0b0" />
              ) : (
                <circle cx="23" cy="14" r={r} fill="#d7d7d7" stroke="#b0b0b0" strokeWidth="2.600" />
              )}
            </svg>
            <span className="w-[55px] text-right text-[18.500px] font-light tracking-[.400px]">{t}</span>
          </div>
        ))}
      </section>
      <section className="h-[102px] border border-[#d4d4d4] bg-white pl-[11px] pt-[40px]">
        <div className="h-[23px] w-[218px] border border-[#aaa] bg-[linear-gradient(90deg,#a0d884_0%,#a0d884_1%,#ccd8be_9%,#f7a898_18%,#f08066_36%,#e65346_60%,#cc2a3c_78%,#a60c35_100%)]" />
        <div className="ml-[55px] mt-px h-[6px] w-[2px] bg-black" />
        <div className="mr-[12px] flex justify-between text-[18.500px] font-light leading-[18px] tracking-[.400px]">
          <span>0.03</span>
          <span>54.42</span>
        </div>
      </section>
    </div>
  );
}

function MapView() {
  return (
    <section className="w-[1074px] shrink-0 border border-[#d4d4d4] bg-white">
      <h2 className="h-[70px] whitespace-nowrap pl-[11px] pt-[16px] font-['Open_Sans',sans-serif] text-[28.500px] font-light leading-[40px] tracking-[1.280px] text-[#333]">
        Average CO2 Per Capita
      </h2>
      <div className="relative ml-[6px] h-[586px] w-[1060px] border border-[#a8a8a8]">
        <WorldMap />
        <button className="absolute left-[13px] top-[13px] flex h-[41px] w-[41px] items-center justify-center bg-[#d6d6d6] text-[#777]">
          <Ico w={20} h={20}>
            <circle cx="11.500" cy="8" r="7" />
            <path d="M6.800 13L1.500 19" strokeWidth="2.200" />
          </Ico>
        </button>
        <div className="absolute left-[13px] top-[75px] flex h-[149px] w-[40px] flex-col items-center bg-[#d6d6d6] text-[#666]">
          <Ico w={16} h={16} className="mt-[13px]">
            <path d="M0 8h16M8 0v16" strokeWidth="3" />
          </Ico>
          <Ico w={16} h={4} className="mt-[22px]">
            <path d="M0 2h16" strokeWidth="3" />
          </Ico>
          <Ico w={24} h={24} className="mt-[18px]">
            <path d="M1.500 12L12 1.500 22.500 12v1.500H1.500zM4 13.500v9h16v-9M9.500 22.500v-9h5v9M18 6V2.500" strokeWidth="1.600" />
          </Ico>
          <div className="mt-[9px] h-px w-[30px] bg-[#b8b8b8]" />
          <svg viewBox="0 0 10 16" className="mt-[13px] h-[16px] w-[10px]">
            <path d="M0 0l10 8-10 8z" fill="#666" />
          </svg>
        </div>
        <div className="absolute bottom-0 left-0 flex h-[23px] w-[281px] items-center justify-between whitespace-nowrap bg-[#22263a] pl-[3px] pr-[3px] text-[16.400px] font-medium tracking-[-.1px] text-[#eee]">
          <span>© 2024 Mapbox</span>
          <span>© OpenStreetMap</span>
        </div>
      </div>
    </section>
  );
}

/* ---------- bottom tabs ---------- */

function BottomBar() {
  return (
    <footer className="shrink-0">
      <div className="flex h-[45px] items-stretch whitespace-nowrap border-y border-[#c8c8c8] bg-[#e6e6e6] text-[17.900px] leading-[40px] text-[#666]">
        <div className="flex w-[189px] border-r border-[#c8c8c8] pl-[16px]">
          <Ico w={14} h={20} className="mr-[7px] mt-[12px]">
            <rect x="1.500" y="1.500" width="11" height="16" rx="4" strokeWidth="1.500" />
            <path d="M1.500 5.500q0 2.500 5.500 2.500t5.500-2.500" strokeWidth="1.500" />
          </Ico>
          Data Source
        </div>
        <div className="w-[58px] border-r border-[#c8c8c8] bg-[#fafafa] text-center font-medium text-[#222]">Map</div>
        <div className="w-[51px] border-r border-[#c8c8c8] text-center">line</div>
        <div className="flex w-[157px] border-r border-[#c8c8c8] pl-[14px]">
          <Ico w={19} h={18} className="mr-[8px] mt-[11px]">
            <path d="M1.500 1.500h15.500v15H1.500zM9.250 1.500v15M1.500 9h15.500" strokeWidth="1.500" />
          </Ico>
          Dashboard 1
        </div>
        <div className="flex w-[48px] border-r border-[#c8c8c8] pl-[13px] pt-[8px]">
          <Ico w={24} h={26}>
            <path d="M11 17.500H1.500v-15h16V11M6 14v-3M9.500 14V7M13 14V9" strokeWidth="1.500" />
            <path d="M11.500 18h12M17.500 12v12" strokeWidth="2.800" />
          </Ico>
        </div>
        <div className="flex w-[48px] border-r border-[#c8c8c8] pl-[13px] pt-[8px]">
          <Ico w={24} h={26}>
            <path d="M11 17.500H1.500v-15h16V11M9.500 2.500v15M1.500 10h16" strokeWidth="1.500" />
            <path d="M11.500 18h12M17.500 12v12" strokeWidth="2.800" />
          </Ico>
        </div>
        <div className="flex w-[48px] border-r border-[#c8c8c8] pl-[13px] pt-[8px]">
          <Ico w={24} h={26}>
            <path d="M9.500 6L1.500 2.500v13l8 4zM9.500 6l8-3.500V11" strokeWidth="1.500" />
            <path d="M11.500 18h12M17.500 12v12" strokeWidth="2.800" />
          </Ico>
        </div>
      </div>
      <div className="flex h-[24px] items-center gap-[18px] bg-[#ebebeb] pl-[15px] pt-[2px] text-[14.850px] text-[#222]">
        <span>213 marks</span>
        <span>1 row by 1 column</span>
        <span>SUM of AVG(CO2 Per Capita (metric tons)): 872.98</span>
      </div>
    </footer>
  );
}

export default function App() {
  return (
    <div className="flex h-[994px] w-[1918px] flex-col overflow-hidden bg-[#f3f3f3] font-['Inter',sans-serif]">
      <Header />
      <Toolbar />
      <main className="flex min-h-0 flex-1">
        <DataPane />
        <div className="ml-[9px] flex">
          <Cards />
        </div>
        <div className="ml-[9px] flex w-[1326px] flex-col">
          <Shelf
            name="Columns"
            pill="Longitude (generated)"
            icon={
              <Ico w={18} h={20}>
                <path d="M2.500 0v3M9 0v3M15.500 0v3M2.500 5v14M9 5v14M15.500 5v14" strokeWidth="3" />
              </Ico>
            }
          />
          <div className="h-[9px]" />
          <Shelf
            name="Rows"
            pill="Latitude (generated)"
            icon={
              <Ico w={19} h={20}>
                <path d="M0 4h3M0 10h3M0 16h3M5 4h14M5 10h14M5 16h14" strokeWidth="3" />
              </Ico>
            }
          />
          <div className="mt-[11px] flex h-[665px] gap-[9px]">
            <MapView />
            <Legends />
          </div>
        </div>
      </main>
      <BottomBar />
    </div>
  );
}
